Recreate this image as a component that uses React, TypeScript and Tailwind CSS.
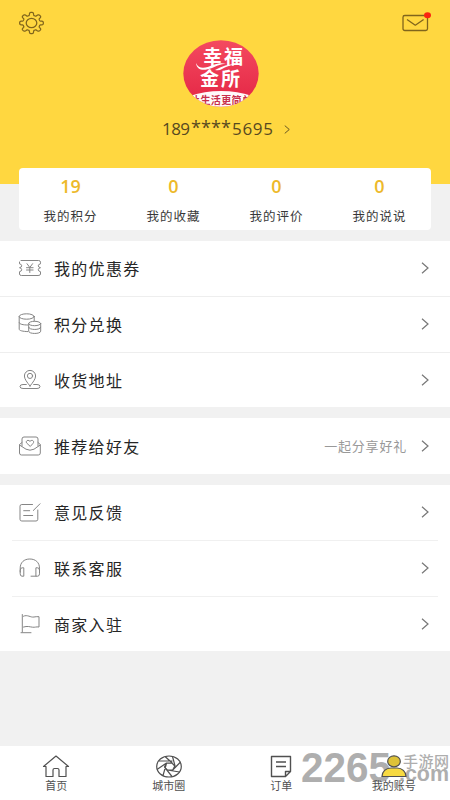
import { JSX, ReactNode } from "react"

type MenuItem = { label: string; icon: ReactNode; note?: string }

const stats = [
  { value: "19", label: "我的积分" },
  { value: "0", label: "我的收藏" },
  { value: "0", label: "我的评价" },
  { value: "0", label: "我的说说" },
]

// eight rounded teeth around an ellipse
const gearPath =
  Array.from({ length: 160 }, (_, i) => {
    const angle = (i / 160) * Math.PI * 2
    const r = 0.86 + 0.14 * Math.tanh(2.2 * Math.cos(angle * 8) + 0.1)
    return `${i === 0 ? "M" : "L"}${(14 + 12.3 * r * Math.cos(angle)).toFixed(2)} ${(13 + 11 * r * Math.sin(angle)).toFixed(2)}`
  }).join("") + "Z"

function LineIcon({ children }: { children: ReactNode }) {
  return (
    <svg viewBox="0 0 24 24" className="h-6 w-6 shrink-0" fill="none" stroke="#858585" strokeWidth="1" strokeLinecap="round" strokeLinejoin="round">
      {children}
    </svg>
  )
}

function Chevron({ className }: { className: string }) {
  return (
    <svg viewBox="0 0 8 12" className={className} fill="none" stroke="currentColor" strokeWidth="1.2">
      <path d="M1 .8 7 6 1 11.2" />
    </svg>
  )
}

const groups: MenuItem[][] = [
  [
    {
      label: "我的优惠券",
      icon: (
        <LineIcon>
          <path d="M3 4.500h17.500q2 0 2 1.700v1.600q-2.200.4-2.200 2t2.200 1.900q-2.200.4-2.200 2t2.200 2V18q0 1.500-2 1.500M20 19.500H3.500q-2 0-2-1.500v-2.300q2.200-.4 2.200-2t-2.200-2q2.200-.3 2.200-1.900t-2.200-2V6" />
          <path d="m9 7.700 2.800 3.800 2.800-3.800M8.500 11.700h6.600M8.500 14h6.600M11.800 11.700v4.800" />
        </LineIcon>
      ),
    },
    {
      label: "积分兑换",
      icon: (
        <LineIcon>
          <ellipse cx="8.700" cy="4.500" rx="7.500" ry="2.700" />
          <path d="M1.200 4.500v12.800c0 1.200 3.500 2.200 8.500 2.300M16.200 4.500V9M1.200 10.700c0 1.500 4 2.300 8.500 2.300" />
          <ellipse cx="16.700" cy="11.500" rx="6" ry="2.200" />
          <path d="M10.700 11.500v7.700c0 3 12 3 12 0v-7.700M10.700 15.300c0 3 12 3 12 0" />
        </LineIcon>
      ),
    },
    {
      label: "收货地址",
      icon: (
        <LineIcon>
          <path d="M12 18C9 14.200 6.400 11 6.400 8a5.600 5.600 0 0 1 11.200 0c0 3-2.600 6.200-5.600 10Z" />
          <circle cx="12" cy="7.900" r="2.600" />
          <path d="M8.300 16.500H5q-3 0-3 2t3 2h14q3 0 3-2t-3-2h-3.300" />
        </LineIcon>
      ),
    },
  ],
  [
    {
      label: "推荐给好友",
      note: "一起分享好礼",
      icon: (
        <LineIcon>
          <path d="M4 12V5q0-2 2-2h12q2 0 2 2v7M4 8.500l-2.500 2V19q0 2 2 2h16.800q2 0 2-2v-8.500L20 8.500M1.500 11 8 15.200q4 2 8 0l6.300-4.200" />
          <path d="M12 12.200 8.800 9.200C7 7.200 10 5 12 7.400c2-2.400 5-.2 3.200 1.800Z" />
        </LineIcon>
      ),
    },
  ],
  [
    {
      label: "意见反馈",
      icon: (
        <LineIcon>
          <path d="M14.500 4.500H3.800q-1.800 0-1.800 1.800v13q0 1.700 1.800 1.700H18q1.800 0 1.800-1.700V10M22 3.800 15.300 10.500M5.700 10.700h6M5.700 15.500h9" />
        </LineIcon>
      ),
    },
    {
      label: "联系客服",
      icon: (
        <LineIcon>
          <path d="M2.200 16v-3.800C2.200 6.500 6 3 11.800 3s9.700 3.500 9.700 9.200V16M2.200 14q0-2.200 2-2.200h1.600v8.400H4q-1.800 0-1.800-2ZM21.500 14q0-2.200-2-2.200h-1.600v8.400h1.700q1.900 0 1.900-2ZM13 20.200h4.900" />
        </LineIcon>
      ),
    },
    {
      label: "商家入驻",
      icon: (
        <LineIcon>
          <path d="M4.300 2.500V20M3 20.700h10M5.500 4.200c4-2 7 1.500 10.500.8q2-.5 5-.3V15c-3-.4-4 .5-6.500.2-3-.4-5-1.400-9-.2" />
        </LineIcon>
      ),
    },
  ],
]

function MenuGroup({ items, inset }: { items: MenuItem[]; inset: boolean }) {
  return (
    <div className="bg-white">
      {items.map((item, index) => (
        <div key={item.label}>
          {index > 0 && <div className={inset ? "mx-3 h-px bg-[#f0f0f0]" : "h-px bg-[#eeeeee]"} />}
          <div className={`flex items-center pb-px pl-[18px] pr-[21px] ${item.note ? "h-14" : index === 2 ? "h-[54px]" : "h-[55px]"}`}>
            {item.icon}
            <span className="ml-3 text-[16px] tracking-[1.3px] text-[#262626]">{item.label}</span>
            {item.note && <span className="ml-auto mr-[14px] text-[13px] tracking-[0.8px] text-[#999999]">{item.note}</span>}
            <Chevron className={item.note ? "h-3 w-2 text-[#777777]" : "ml-auto h-3 w-2 text-[#777777]"} />
          </div>
        </div>
      ))}
    </div>
  )
}

function Avatar() {
  return (
    <svg viewBox="0 0 76 68" className="h-[68px] w-[76px]">
      <defs>
        <clipPath id="avatar">
          <ellipse cx="38" cy="33.500" rx="37.700" ry="33.300" />
        </clipPath>
        <linearGradient id="red" x1="0" x2="0" y1="0" y2="1">
          <stop stopColor="#f44a60" />
          <stop offset="1" stopColor="#e32443" />
        </linearGradient>
      </defs>
      <g clipPath="url(#avatar)">
        <path fill="url(#red)" d="M0 0h76v68H0z" />
        <ellipse cx="38" cy="66" rx="42" ry="15" fill="#fffafa" />
        <g fill="white" fontFamily="'Noto Sans CJK SC', sans-serif" fontWeight="700" fontSize="19">
          <text x="20" y="24" textLength="40">幸福</text>
          <text x="17" y="46" textLength="40">金所</text>
        </g>
        <path d="M13 23c3 7 10 5 17 2 6-2 9-2 13-1-6 0-9 2-14 4-8 3-15 3-16-5ZM32 30q10-6 21-6-9 2-14 5-3 2-7 1Z" fill="white" />
        <text x="7" y="64" fill="#c82e4b" fontFamily="'Noto Sans CJK SC', sans-serif" fontWeight="700" fontSize="10" textLength="62">让生活更简单</text>
      </g>
    </svg>
  )
}

function TabBar() {
  const label = "text-[11px] leading-[11px]"
  return (
    <nav className="relative mt-auto h-[54px] bg-white text-[#505050]">
      <div className="grid h-full grid-cols-4">
        <div className="flex flex-col items-center pt-2">
          <svg viewBox="0 0 28 26" className="h-[26px] w-7" fill="none" stroke="currentColor" strokeWidth="1.200" strokeLinejoin="round">
            <path d="M4 12.500H1.500L14 2l12.500 10.500H24v10h-7V16q0-1.500-1.500-1.500h-3Q11 14.500 11 16v6.500H4Z" />
          </svg>
          <span className={label}>首页</span>
        </div>
        <div className="flex flex-col items-center pt-2">
          <svg viewBox="0 0 28 26" className="h-[26px] w-7" fill="none" stroke="currentColor" strokeWidth="1.200">
            <ellipse cx="14" cy="12.500" rx="12.300" ry="10.500" />
            <path d="m11.500 9 5.500.1 2.800 3-2 3.700-5.300.3-3-3.200ZM4 7h13.500M10 2.500 17.300 9M17.500 2.500l2.600 9.700M25.500 8l-7.800 8M24.500 18l-12.300-2M17 22.500l-7.500-9.300M8 21.500l3.600-12.300M2 15.500 11.500 9" />
          </svg>
          <span className={label}>城市圈</span>
        </div>
        <div className="flex flex-col items-center pt-2">
          <svg viewBox="0 0 28 26" className="h-[26px] w-7" fill="none" stroke="currentColor" strokeWidth="1.400" strokeLinejoin="round">
            <path d="M4.500 2.500h19v15l-5 5h-14ZM23.500 17.500h-5v5M9 8h10M9 12.500h10" />
          </svg>
          <span className={label}>订单</span>
        </div>
        <div className="flex flex-col items-center pt-2">
          <svg viewBox="0 0 28 26" className="relative z-10 h-[26px] w-7" stroke="currentColor" strokeWidth="1.200">
            <ellipse cx="14" cy="7.300" rx="6.300" ry="5.500" fill="#ddc238" />
            <path d="M2 22.500c0-5 4-8.500 9-8.500h6c5 0 9 3.500 9 8.500Z" fill="#f7da42" />
          </svg>
          <span className={label + " relative z-10"}>我的账号</span>
        </div>
      </div>
      <svg
        viewBox="0 0 149 54"
        className="pointer-events-none absolute left-[301px] top-0 h-[54px] w-[149px] text-[#aeaeae]"
        fill="currentColor"
        fontFamily="'Liberation Sans', 'Noto Sans CJK SC', sans-serif"
        fontWeight="700"
      >
        <text x="0" y="36" fontSize="43" textLength="90" lengthAdjust="spacingAndGlyphs">2265</text>
        <text x="102" y="21" fontSize="15" fontWeight="500" textLength="46">手游网</text>
        <text x="98" y="35" fontSize="22" textLength="50" lengthAdjust="spacingAndGlyphs">.com</text>
      </svg>
    </nav>
  )
}

export default function App(): JSX.Element {
  return (
    <div className="flex h-[800px] w-[450px] flex-col overflow-hidden bg-[#f1f1f1] font-['Noto_Sans_CJK_SC',sans-serif]">
      <header className="h-[184px] shrink-0 bg-[#ffd740] text-[#80651c]">
        <div className="flex h-10 items-start justify-between px-[18px] pt-[10px]">
          <svg viewBox="0 0 28 26" className="h-[26px] w-[27px]" fill="none" stroke="currentColor" strokeWidth="1.300" strokeLinejoin="round">
            <path d={gearPath} />
            <ellipse cx="14" cy="13" rx="5.500" ry="4.800" />
          </svg>
          <svg viewBox="0 0 30 22" className="h-[22px] w-[30px]" fill="none" stroke="currentColor" strokeWidth="1.300" strokeLinejoin="round">
            <rect x="1" y="5.500" width="24.500" height="15" rx="1.800" />
            <path d="m5 9.500 8.300 5.700 8.300-5.700" />
            <ellipse cx="25.500" cy="5.200" rx="3.500" ry="3" fill="#fb2410" stroke="none" />
          </svg>
        </div>
        <div className="flex justify-center pr-2">
          <Avatar />
        </div>
        <div className="mt-[11px] flex items-center pl-[162px] font-['Open_Sans',sans-serif] text-[17px] leading-5 text-[#574920]">
          <svg viewBox="0 0 112 20" className="h-5 w-28 overflow-visible" fill="currentColor">
            <text x="0" y="16" textLength="28">189</text>
            <text x="29" y="14.500" fontSize="18" textLength="40">****</text>
            <text x="70" y="16" textLength="41">5695</text>
          </svg>
          <Chevron className="ml-[10px] h-[9px] w-[6px]" />
        </div>
      </header>

      <div className="relative mx-[19px] -mt-4 grid h-[62px] shrink-0 grid-cols-4 rounded-[4px] bg-white">
        {stats.map((stat) => (
          <div key={stat.label} className="flex flex-col items-center pt-2">
            <span className="font-['Open_Sans',sans-serif] text-[18px] font-semibold leading-5 text-[#edb92a]">{stat.value}</span>
            <span className="mt-[11px] text-[12.500px] leading-[18px] tracking-[1px] text-[#383838]">{stat.label}</span>
          </div>
        ))}
      </div>

      <main className="mt-[11px] flex flex-col gap-[11px]">
        {groups.map((items, index) => (
          <MenuGroup key={items[0].label} items={items} inset={index === 2} />
        ))}
      </main>
      <TabBar />
    </div>
  )
}
